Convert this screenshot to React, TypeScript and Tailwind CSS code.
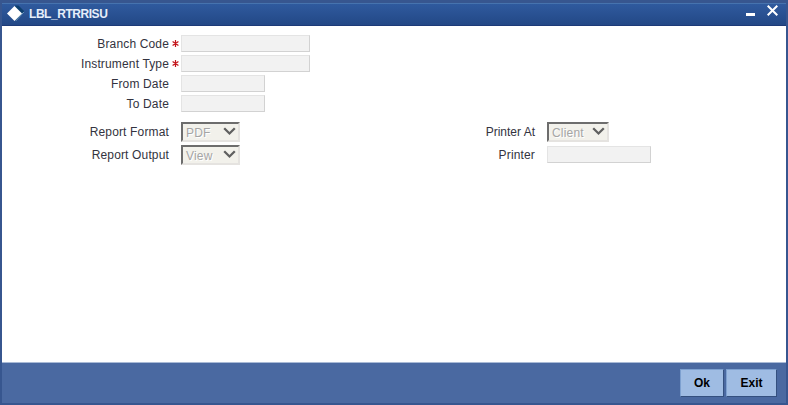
import React from "react";

const Label = ({ text, required, tight }: { text: string; required?: boolean; tight?: boolean }) => (
    <div className="flex w-[179px] shrink-0 justify-end text-[12px] leading-[18px] text-[#333340]">
        <span className={`whitespace-nowrap ${tight ? "tracking-normal" : "tracking-[0.15px]"}`}>{text}</span>
        <span className="flex w-3 justify-end pr-[2px]">
            {required && (
                <svg
                    width="7"
                    height="7"
                    viewBox="0 0 7 7"
                    className="mt-[5px]"
                    stroke="#c4161c"
                    strokeWidth="1.2"
                >
                    <path d="M3.5 0v7M0.600 1.400l5.800 4.200M6.400 1.400l-5.800 4.200" />
                </svg>
            )}
        </span>
    </div>
);

const Field = ({ label, required, width }: { label: string; required?: boolean; width: string }) => (
    <div className="flex h-5">
        <Label text={label} required={required} />
        <input
            disabled
            aria-label={label}
            className={`h-[17px] border border-[#e4e4e4] border-r-[#d2d2d2] border-b-[#d2d2d2] bg-[#f2f2f2] ${width}`}
        />
    </div>
);

const SelectBox = ({ value, width }: { value: string; width: string }) => (
    <button
        disabled
        className={`flex h-5 items-center justify-between border-2 border-t-[#6d6d6d] border-l-[#6d6d6d] border-r-[#e5e3e0] border-b-[#e5e3e0] bg-[#f2f1eb] pl-[3px] pr-[2px] text-[12px] leading-4 text-[#a5a5a5] [text-shadow:1px_1px_0_#fff] ${width}`}
    >
        <span className="pt-px tracking-[0.2px]">{value}</span>
        <svg width="13" height="9" viewBox="0 0 13 9" fill="none" stroke="#606060" strokeWidth="2.3" className="mb-px">
            <path d="M1.2 1.3l5.3 5.2 5.3-5.2" />
        </svg>
    </button>
);

const App = () => {
    return (
        <div className="flex h-[405px] w-[788px] flex-col border-2 border-t-3 border-[#37568f] bg-white font-['Liberation_Sans',Arial,sans-serif]">
            <header className="flex h-[23px] shrink-0 items-center border-t border-b border-t-[#4673ae] border-b-[#1d3a78] bg-linear-to-b from-[#2f5a9e] to-[#234886]">
                <svg width="18" height="17" viewBox="0 0 18 17" className="mb-[2px] ml-[5px]">
                    <path d="M8 .5h3.500l6 6-8 9.500z" fill="#0c3f70" />
                    <path d="M7.500 1l7.500 7.500-7.500 7.500-7.500-7.500z" fill="#fff" />
                    <path d="M17 6.800l-8 9" fill="none" stroke="#86b0cf" strokeWidth="0.8" />
                </svg>
                <h1 className="mb-[2px] ml-1 text-[12px] leading-4 font-bold tracking-[-0.45px] text-[#e6eefa]">LBL_RTRRISU</h1>
                <div className="ml-auto flex h-full">
                    <button aria-label="Minimize" className="mt-[9px] mr-3 h-[3px] w-[9px] bg-white" />
                    <button aria-label="Close" className="mt-px mr-[8px] h-[11px] w-[11px]">
                        <svg width="11" height="11" viewBox="0 0 11 11" stroke="#fff" strokeWidth="2">
                            <path d="M.7.7l9.600 9.600M10.300.7L.7 10.300" />
                        </svg>
                    </button>
                </div>
            </header>

            <main className="grow pt-[9px]">
                <Field label="Branch Code" required width="w-[129px]" />
                <Field label="Instrument Type" required width="w-[129px]" />
                <Field label="From Date" width="w-[84px]" />
                <Field label="To Date" width="w-[84px]" />

                <div className="mt-[7px] flex">
                    <div className="w-[366px]">
                        <div className="flex h-[23px]">
                            <div className="pt-px">
                                <Label text="Report Format" />
                            </div>
                            <SelectBox value="PDF" width="w-[59px]" />
                        </div>
                        <div className="flex h-[23px]">
                            <div className="pt-px">
                                <Label text="Report Output" />
                            </div>
                            <SelectBox value="View" width="w-[59px]" />
                        </div>
                    </div>
                    <div>
                        <div className="flex h-6">
                            <div className="pt-px">
                                <Label text="Printer At" tight />
                            </div>
                            <SelectBox value="Client" width="w-[62px]" />
                        </div>
                        <Field label="Printer" width="w-[104px]" />
                    </div>
                </div>
            </main>

            <footer className="flex h-[41px] shrink-0 justify-end gap-[2px] border-t border-[#a9bad6] bg-[#4a69a1] pt-[6px] pr-[9px]">
                <button className="h-7 w-11 border border-[#7da0d0] border-r-[#34507f] border-b-[#34507f] bg-[#9fbce3] text-[12px] font-bold text-black">
                    Ok
                </button>
                <button className="h-7 w-[51px] border border-[#7da0d0] border-r-[#34507f] border-b-[#34507f] bg-[#9fbce3] text-[12px] font-bold text-black">
                    Exit
                </button>
            </footer>
        </div>
    );
};

export default App;
